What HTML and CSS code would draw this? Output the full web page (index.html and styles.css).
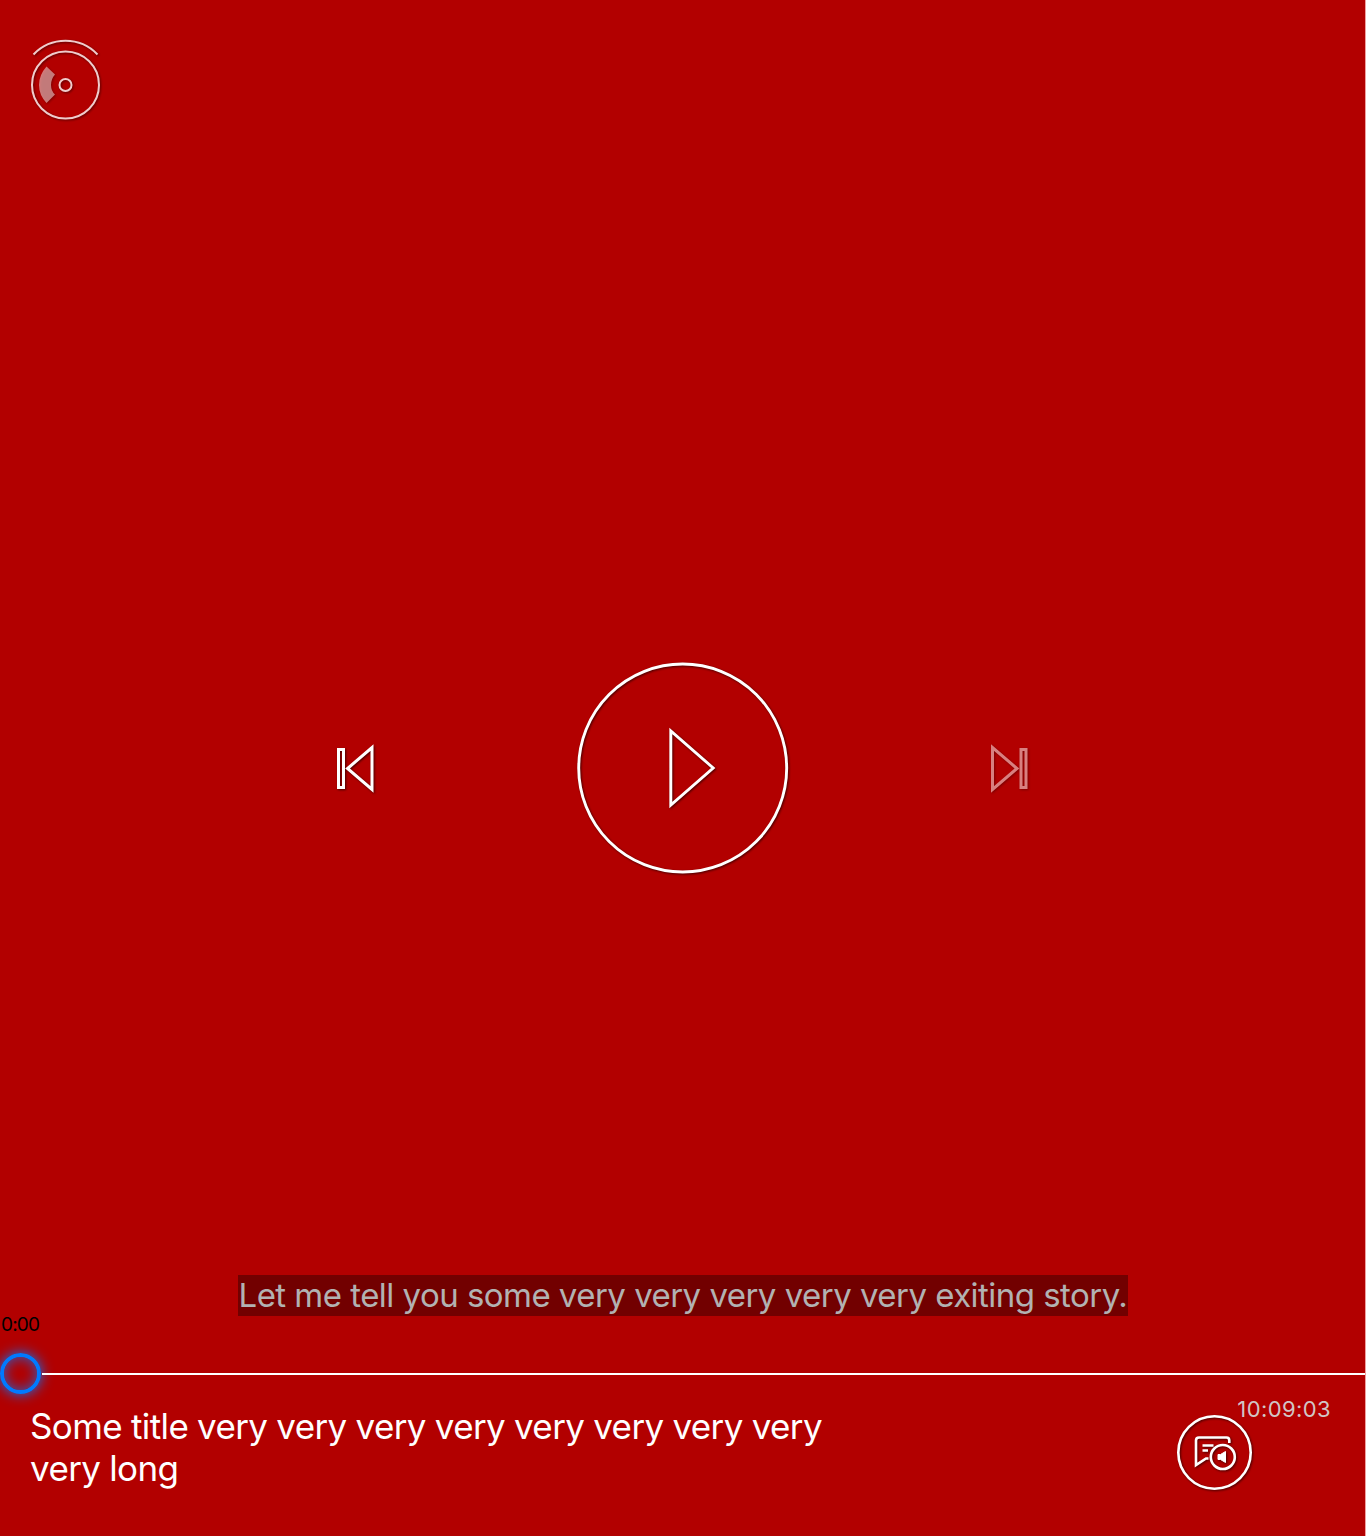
FILE: index.html
```html
<!DOCTYPE html>
<html lang="en">
<head>
<meta charset="utf-8">
<title>Player</title>
<link rel="stylesheet" href="styles.css">
</head>
<body>
<main class="player">
  <header class="top">
    <svg class="icon compass" width="80" height="90" viewBox="0 0 80 90" fill="none" stroke="#fff" stroke-width="2">
      <path d="M8.500 19.500A44.200 44.200 0 0 1 72.500 19.500"/>
      <circle cx="40.500" cy="50" r="33.500"/>
      <circle cx="40.500" cy="50" r="6"/>
      <path class="sector" d="M21.500 31.500L30 39.500Q26 44 26 50T30 59.500L21.500 68Q14 60 14 50T21.500 31.500Z"/>
    </svg>
  </header>
  <section class="controls">
    <svg class="icon skip" width="60" height="70" viewBox="0 0 60 70" fill="none" stroke="#fff" stroke-width="3">
      <path d="M13.500 14.500H18.500V52.500H13.500ZM47 12.500V54.500L22.500 33.500Z"/>
    </svg>
    <svg class="icon play" width="230" height="230" viewBox="0 0 230 230" fill="none" stroke="#fff" stroke-width="2.900">
      <circle cx="112.700" cy="113" r="104"/>
      <path d="M100.800 76V150L143.200 113Z"/>
    </svg>
    <svg class="icon skip disabled" width="60" height="70" viewBox="0 0 60 70" fill="none" stroke="#fff" stroke-width="3">
      <path d="M41 14.500H46V52.500H41ZM12.500 12.500V54.500L37 33.500Z"/>
    </svg>
  </section>
  <p class="caption"><span class="caption-text">Let me tell you some very very very very very exiting story.</span></p>
  <div class="elapsed">0:00</div>
  <div class="timeline"><span class="thumb"></span><span class="track"></span></div>
  <footer class="info">
    <h1 class="title">Some title very very very very very very very very very long</h1>
    <div class="side">
      <time class="duration">10:09:03</time>
      <svg class="icon subtitles" width="80" height="80" viewBox="0 0 80 80" fill="none" stroke="#fff" stroke-width="2.600">
        <circle cx="39.500" cy="40.500" r="36.200"/>
        <path d="M54.300 31V28.500Q54.300 25.500 51.500 25.500H24Q21 25.500 21 28.500V53L31 46.500H33.500M27.500 33.500H38.500M27.500 38.500H33"/>
        <circle cx="47.800" cy="45" r="12"/>
        <path class="speaker" d="M43 42.500H45.500L50.500 39.500V50.500L45.500 47.500H43Z"/>
      </svg>
    </div>
  </footer>
</main>
</body>
</html>
```
FILE: styles.css
```css
* { box-sizing: border-box; }
body { margin: 0; background: #b20000; }
.player {
  height: 1536px;
  display: flex;
  flex-direction: column;
  overflow: hidden;
  border-right: 1px solid #f0a0a0;
  background: #b20000;
  color: #fff;
  font-family: Inter, "Liberation Sans", sans-serif;
}
.icon { display: block; flex: none; filter: drop-shadow(1px 1px 1px rgba(0, 0, 0, .6)); }
.top { height: 655px; padding: 35px 25px; }
.compass { opacity: .8; }
.sector { fill: #fff; fill-opacity: .6; stroke: none; }
.speaker { fill: #fff; stroke-width: 1; }
.controls { height: 230px; padding: 0 325px; display: flex; justify-content: space-between; }
.skip { margin-top: 80px; }
.play { margin-left: 5px; }
.disabled { opacity: .5; }
.caption { margin: 390px 0 0; height: 40px; display: flex; justify-content: center; }
.caption-text {
  width: 890px;
  height: 41px;
  padding-left: 1px;
  background: #720000;
  color: #b2b2b2;
  font-size: 33px;
  letter-spacing: -.53px;
  line-height: 40px;
  white-space: nowrap;
}
.elapsed {
  height: 38px;
  padding: 0 1px;
  color: #000;
  font-size: 19px;
  font-feature-settings: "calt" 0;
  letter-spacing: -.8px;
  line-height: 19px;
}
.timeline { height: 41px; display: flex; align-items: center; }
.thumb {
  width: 41px;
  height: 41px;
  border: 4px solid #007aff;
  border-radius: 50%;
  box-shadow: 0 0 13px #007aff, inset 0 0 13px rgba(0, 122, 255, .75);
}
.track { flex: 1; height: 2px; margin-left: 1px; background: #fff; }
.info { display: flex; justify-content: space-between; padding: 0 34px 0 30px; }
.title {
  width: 800px;
  margin: 11px 0 0;
  font-size: 35px;
  font-weight: 400;
  letter-spacing: -.6px;
  word-spacing: -.4px;
  line-height: 42px;
}
.side { width: 156px; padding-top: 1px; }
.duration {
  display: block;
  height: 17px;
  color: #d1c6c6;
  font-size: 22px;
  letter-spacing: .4px;
  line-height: 28px;
  text-align: right;
}
```
